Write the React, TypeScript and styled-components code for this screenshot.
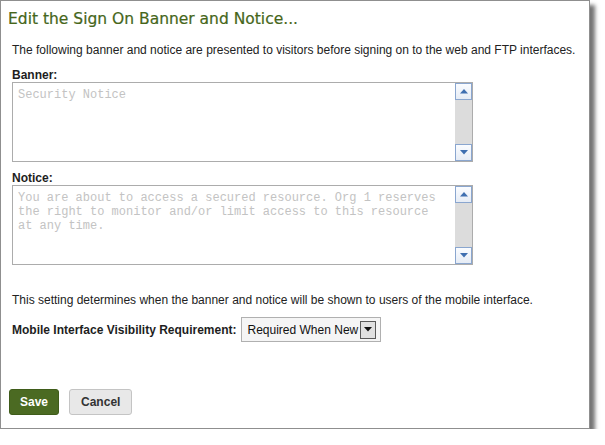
import React from 'react';
import styled, { createGlobalStyle } from 'styled-components';

const GlobalStyle = createGlobalStyle`
    * {
        box-sizing: border-box;
    }
    html, body {
        margin: 0;
        padding: 0;
        background: #ffffff;
    }
    body {
        font-family: 'Liberation Sans', Arial, sans-serif;
        font-size: 12px;
        color: #222222;
    }
`;

const Dialog = styled.div`
    width: 590px;
    height: 429px;
    display: flex;
    flex-direction: column;
    background: #ffffff;
    border: 1px solid #8f8f8f;
    box-shadow: 5px 5px 4px rgba(0, 0, 0, 0.55);
`;

const Title = styled.h1`
    margin: 0;
    padding: 9px 7px 0;
    font-family: 'DejaVu Sans', Verdana, sans-serif;
    font-weight: normal;
    font-size: 15.5px;
    line-height: 18px;
    color: #46661a;
    -webkit-text-stroke: 0.2px #46661a;
`;

const Body = styled.div`
    display: flex;
    flex-direction: column;
    padding: 0 11px;
`;

const Text = styled.p<{ $top: number }>`
    margin: ${(p) => p.$top}px 0 0;
    line-height: 14px;
    white-space: nowrap;
`;

const Label = styled.label<{ $top: number }>`
    display: block;
    margin-top: ${(p) => p.$top}px;
    font-weight: bold;
    line-height: 14px;
    color: #1e1e1e;
`;

const TextBox = styled.div`
    width: 461px;
    height: 80px;
    display: flex;
    border: 1px solid #acacac;
    background: #ffffff;
`;

const Area = styled.textarea`
    flex: 1;
    margin: 0;
    padding: 5px 14px 3px 5px;
    border: 0;
    outline: none;
    resize: none;
    overflow: hidden;
    font-family: 'Liberation Mono', 'Courier New', monospace;
    font-size: 12px;
    line-height: 14px;
    color: #222222;
    &::placeholder {
        color: #c3c3c3;
        opacity: 1;
    }
`;

const Scrollbar = styled.div`
    width: 17px;
    display: flex;
    flex-direction: column;
    justify-content: space-between;
    background: #dcdcdc;
`;

const ScrollButton = styled.div`
    width: 17px;
    height: 17px;
    display: flex;
    align-items: center;
    justify-content: center;
    background: linear-gradient(#fafcff, #e6ecf5);
    border: 1px solid #8aa6cf;
`;

const Row = styled.div`
    display: flex;
    align-items: center;
    gap: 4px;
    margin-top: 10px;
`;

const RowLabel = styled.span`
    font-weight: bold;
    line-height: 14px;
    color: #1e1e1e;
`;

const Select = styled.div`
    width: 140px;
    height: 25px;
    display: flex;
    align-items: center;
    justify-content: space-between;
    padding: 0 4px 0 6px;
    background: #f5f5f5;
    border: 1px solid #b0b0b0;
    color: #111111;
`;

const SelectArrow = styled.div`
    width: 16px;
    height: 18px;
    display: flex;
    align-items: center;
    justify-content: center;
    background: #e1e1e1;
    border: 1px solid #5a5a5a;
`;

const Footer = styled.div`
    margin-top: auto;
    display: flex;
    gap: 10px;
    padding: 0 8px 13px;
`;

const Button = styled.button<{ $primary?: boolean }>`
    height: 26px;
    padding: 0 ${(p) => (p.$primary ? 10 : 11)}px;
    border-radius: 3px;
    border: 1px solid ${(p) => (p.$primary ? '#3f5c1a' : '#c4c4c4')};
    background: ${(p) => (p.$primary ? '#4b6a22' : '#e8e8e8')};
    color: ${(p) => (p.$primary ? '#ffffff' : '#333333')};
    font-family: 'Liberation Sans', Arial, sans-serif;
    font-size: 12px;
    font-weight: bold;
    cursor: pointer;
`;

function Triangle(props: { down?: boolean; color: string }): JSX.Element {
    const { down, color } = props;
    return (
        <svg width="8" height="5" viewBox="0 0 8 5">
            <polygon points={down ? '0,0 8,0 4,4.5' : '0,4.5 8,4.5 4,0'} fill={color} />
        </svg>
    );
}

function ScrollArea(props: { placeholder: string }): JSX.Element {
    const { placeholder } = props;
    return (
        <TextBox>
            <Area placeholder={placeholder} />
            <Scrollbar>
                <ScrollButton>
                    <Triangle color="#3f6fb0" />
                </ScrollButton>
                <ScrollButton>
                    <Triangle down color="#3f6fb0" />
                </ScrollButton>
            </Scrollbar>
        </TextBox>
    );
}

export default function App(): JSX.Element {
    return (
        <>
            <GlobalStyle />
            <Dialog>
                <Title>Edit the Sign On Banner and Notice...</Title>
                <Body>
                    <Text $top={15}>
                        The following banner and notice are presented to visitors before signing on to the web and FTP
                        interfaces.
                    </Text>
                    <Label $top={11}>Banner:</Label>
                    <ScrollArea placeholder="Security Notice" />
                    <Label $top={9}>Notice:</Label>
                    <ScrollArea placeholder="You are about to access a secured resource. Org 1 reserves the right to monitor and/or limit access to this resource at any time." />
                    <Text $top={28}>
                        This setting determines when the banner and notice will be shown to users of the mobile
                        interface.
                    </Text>
                    <Row>
                        <RowLabel>Mobile Interface Visibility Requirement:</RowLabel>
                        <Select>
                            Required When New
                            <SelectArrow>
                                <Triangle down color="#111111" />
                            </SelectArrow>
                        </Select>
                    </Row>
                </Body>
                <Footer>
                    <Button $primary>Save</Button>
                    <Button>Cancel</Button>
                </Footer>
            </Dialog>
        </>
    );
}
